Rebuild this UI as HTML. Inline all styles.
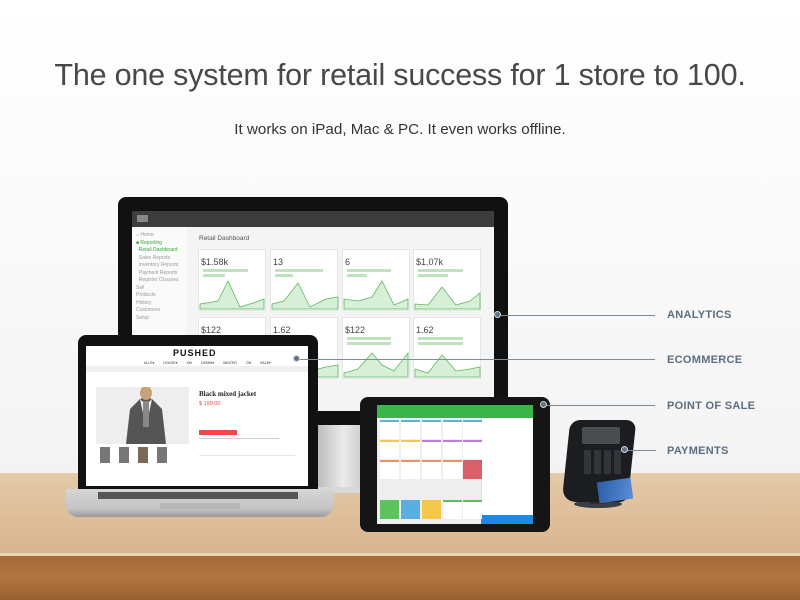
<!DOCTYPE html>
<html><head><meta charset="utf-8"><style>
*{margin:0;padding:0;box-sizing:border-box}
body{width:800px;height:600px;overflow:hidden;position:relative;font-family:"Liberation Sans",sans-serif;background:linear-gradient(#ffffff,#f5f5f5 70%,#eeeeee)}
.a{position:absolute}
h1{position:absolute;top:58px;left:0;width:800px;text-align:center;font-weight:normal;font-size:30.5px;color:#484848;letter-spacing:-0.2px}
.sub{position:absolute;top:121px;left:0;width:800px;text-align:center;font-size:15.2px;color:#333}
.lbl{position:absolute;font-size:11px;font-weight:bold;color:#5b6e80;letter-spacing:0.3px}
.ln{position:absolute;height:1px;background:#7d8c99}
.dot{position:absolute;width:7px;height:7px;border-radius:50%;background:#5e7384;border:1px solid #cfd8de}
.card{position:absolute;background:#fff;border:1px solid #e6e6e6}
.g{background:#bfe3bf;height:3px;position:absolute}
.tile{position:absolute;background:#fff;border-top:2px solid #5bb0e8;width:19px;height:19px}
</style></head><body>
<h1>The one system for retail success for 1 store to 100.</h1>
<div class="sub">It works on iPad, Mac &amp; PC. It even works offline.</div>

<div class="a" style="left:0;top:473px;width:800px;height:82px;background:linear-gradient(#e3caa8,#e0c19e 40%,#d9b58f)"></div>
<div class="a" style="left:0;top:553px;width:800px;height:3px;background:#ecd5b6"></div>
<div class="a" style="left:0;top:556px;width:800px;height:44px;background:linear-gradient(#a76b3c,#b0743f 50%,#99612f)"></div>

<div class="a" style="left:318px;top:415px;width:50px;height:75px;background:linear-gradient(90deg,#bdbdbd,#eaeaea 50%,#c4c4c4)"></div>
<div class="a" style="left:300px;top:487px;width:62px;height:6px;background:#d8d8d8;border-radius:2px"></div>
<div class="a" style="left:118px;top:197px;width:390px;height:228px;background:#111;border-radius:8px 8px 0 0"></div>
<div class="a" style="left:132px;top:211px;width:362px;height:200px;background:#f4f4f4"></div>
<div class="a" style="left:132px;top:211px;width:362px;height:16px;background:#3d3d3d"></div>
<div class="a" style="left:137px;top:215px;width:11px;height:7px;background:#888"></div>
<div class="a" style="left:132px;top:227px;width:54px;height:184px;background:#fafafa"></div>
<div class="a" style="left:136px;top:232px;font-size:5px;color:#999;line-height:7.5px">⌂ Home<br><span style="color:#3a3">■ Reporting</span><br>&nbsp; <span style="color:#3a3">Retail Dashboard</span><br>&nbsp; Sales Reports<br>&nbsp; Inventory Reports<br>&nbsp; Payment Reports<br>&nbsp; Register Closures<br>Sell<br>Products<br>History<br>Customers<br>Setup</div>
<div class="a" style="left:199px;top:235px;font-size:6.5px;color:#555">Retail Dashboard</div>
<div class="card" style="left:198px;top:249px;width:68px;height:62px"></div>
<div class="card" style="left:270px;top:249px;width:68px;height:62px"></div>
<div class="card" style="left:342px;top:249px;width:68px;height:62px"></div>
<div class="card" style="left:413px;top:249px;width:68px;height:62px"></div>
<div class="card" style="left:198px;top:317px;width:68px;height:62px"></div>
<div class="card" style="left:270px;top:317px;width:68px;height:62px"></div>
<div class="card" style="left:342px;top:317px;width:68px;height:62px"></div>
<div class="card" style="left:413px;top:317px;width:68px;height:62px"></div>
<div class="a" style="left:201px;top:257px;font-size:9px;color:#444">$1.58k</div>
<div class="a" style="left:273px;top:257px;font-size:9px;color:#444">13</div>
<div class="a" style="left:345px;top:257px;font-size:9px;color:#444">6</div>
<div class="a" style="left:416px;top:257px;font-size:9px;color:#444">$1.07k</div>
<div class="a" style="left:201px;top:325px;font-size:9px;color:#444">$122</div>
<div class="a" style="left:273px;top:325px;font-size:9px;color:#444">1.62</div>
<div class="a" style="left:345px;top:325px;font-size:9px;color:#444">$122</div>
<div class="a" style="left:416px;top:325px;font-size:9px;color:#444">1.62</div>
<svg class="a" style="left:198px;top:249px" width="284" height="130">
<g fill="#d6efd6" stroke="#5cb85c" stroke-width="0.8">
<path d="M2 55 L20 52 L30 32 L42 58 L55 54 L66 50 V60 H2Z"/>
<path d="M74 55 L86 52 L100 34 L112 58 L128 50 L140 48 V60 H74Z"/>
<path d="M146 50 L160 52 L174 48 L184 32 L196 56 L210 50 V60 H146Z"/>
<path d="M217 55 L230 56 L244 38 L258 56 L272 52 L282 44 V60 H217Z"/>
<path d="M2 120 L20 122 L30 105 L42 126 L55 120 L66 118 V128 H2Z"/>
<path d="M74 124 L88 126 L100 104 L112 122 L128 118 L140 116 V128 H74Z"/>
<path d="M146 124 L160 120 L174 104 L184 116 L196 122 L210 104 V128 H146Z"/>
<path d="M217 120 L230 124 L244 106 L258 122 L272 120 L282 118 V128 H217Z"/>
</g></svg>
<div class="g" style="left:203px;top:269px;width:45px"></div><div class="g" style="left:275px;top:269px;width:48px"></div><div class="g" style="left:347px;top:269px;width:44px"></div><div class="g" style="left:418px;top:269px;width:45px"></div>
<div class="g" style="left:203px;top:274px;width:22px"></div><div class="g" style="left:275px;top:274px;width:18px"></div><div class="g" style="left:347px;top:274px;width:20px"></div><div class="g" style="left:418px;top:274px;width:30px"></div>
<div class="g" style="left:347px;top:337px;width:44px"></div><div class="g" style="left:418px;top:337px;width:45px"></div>
<div class="g" style="left:347px;top:342px;width:44px"></div><div class="g" style="left:418px;top:342px;width:45px"></div>

<div class="a" style="left:78px;top:335px;width:240px;height:156px;background:#111;border-radius:8px 8px 0 0"></div>
<div class="a" style="left:86px;top:346px;width:222px;height:140px;background:#fff"></div>
<div class="a" style="left:86px;top:366px;width:222px;height:6px;background:#f0f0f0"></div>
<div class="a" style="left:173px;top:348px;font-size:9px;font-weight:bold;letter-spacing:1px;color:#111">PUSHED</div>
<div class="a" style="left:144px;top:361px;font-size:3.5px;color:#333;word-spacing:8px">ALLE▾ HOUSE▾ SKI DENIM▾ WINTER ON SALE▾</div>
<div class="a" style="left:96px;top:387px;width:93px;height:57px;background:#eee"></div>
<svg class="a" style="left:96px;top:387px" width="93" height="57"><path d="M30 57 L34 22 L44 12 L50 10 L56 12 L66 22 L70 57Z" fill="#555"/><path d="M44 12 L50 40 L56 12 L52 16 L48 16Z" fill="#f4f4f4"/><path d="M47 14 L53 14 L53 40 L47 40Z" fill="#888"/><ellipse cx="50" cy="6" rx="6" ry="7" fill="#c9a078"/></svg>
<div class="a" style="left:100px;top:447px;width:10px;height:16px;background:#777"></div>
<div class="a" style="left:119px;top:447px;width:10px;height:16px;background:#777"></div>
<div class="a" style="left:138px;top:447px;width:10px;height:16px;background:#7a6a55"></div>
<div class="a" style="left:157px;top:447px;width:10px;height:16px;background:#777"></div>
<div class="a" style="left:199px;top:390px;font-family:'Liberation Serif',serif;font-weight:bold;font-size:7px;color:#222">Black mixed jacket</div>
<div class="a" style="left:199px;top:401px;font-size:5.5px;color:#e44">$ 199.00</div>
<div class="a" style="left:199px;top:430px;width:38px;height:5px;background:#f04848"></div>
<div class="a" style="left:199px;top:438px;width:80px;height:1px;background:#ccc"></div>
<div class="a" style="left:199px;top:455px;width:96px;height:1px;background:#e6e6e6"></div>
<div class="a" style="left:66px;top:489px;width:267px;height:28px;background:linear-gradient(#d6d6d6,#c4c4c4 70%,#9b9b9b);border-radius:2px 2px 12px 12px"></div>
<div class="a" style="left:98px;top:492px;width:200px;height:7px;background:#555"></div>
<div class="a" style="left:160px;top:503px;width:80px;height:6px;background:#b8b8b8"></div>

<div class="a" style="left:360px;top:397px;width:190px;height:135px;background:#151515;border-radius:8px"></div>
<div class="a" style="left:377px;top:405px;width:156px;height:119px;background:#eeeeee"></div>
<div class="a" style="left:377px;top:405px;width:156px;height:13px;background:#3bb54a"></div>
<div class="a" style="left:481px;top:418px;width:52px;height:106px;background:#fff;border-left:1px solid #ddd"></div>
<div class="a" style="left:481px;top:515px;width:52px;height:9px;background:#1e88e5"></div>
<div class="tile" style="left:380px;top:420px"></div><div class="tile" style="left:401px;top:420px"></div><div class="tile" style="left:422px;top:420px"></div><div class="tile" style="left:443px;top:420px"></div><div class="tile" style="left:463px;top:420px"></div>
<div class="tile" style="left:380px;top:440px;border-color:#f2c94c"></div><div class="tile" style="left:401px;top:440px;border-color:#f2c94c"></div><div class="tile" style="left:422px;top:440px;border-color:#c07be0"></div><div class="tile" style="left:443px;top:440px;border-color:#c07be0"></div><div class="tile" style="left:463px;top:440px;border-color:#c07be0"></div>
<div class="tile" style="left:380px;top:460px;border-color:#f78a6a"></div><div class="tile" style="left:401px;top:460px;border-color:#f78a6a"></div><div class="tile" style="left:422px;top:460px;border-color:#f78a6a"></div><div class="tile" style="left:443px;top:460px;border-color:#f78a6a"></div><div class="tile" style="left:463px;top:460px;background:#d9606a;border-color:#d9606a"></div>
<div class="tile" style="left:380px;top:500px;background:#5dc15d;border-color:#5dc15d"></div><div class="tile" style="left:401px;top:500px;background:#5aaee0;border-color:#5aaee0"></div><div class="tile" style="left:422px;top:500px;background:#f4c84c;border-color:#f4c84c"></div><div class="tile" style="left:443px;top:500px;border-color:#5dc15d"></div><div class="tile" style="left:463px;top:500px;border-color:#5dc15d"></div>

<div class="a" style="left:574px;top:500px;width:48px;height:8px;background:#3a3d44;border-radius:50%"></div>
<div class="a" style="left:590px;top:490px;width:14px;height:14px;background:#2a2c30"></div>
<div class="a" style="left:566px;top:420px;width:66px;height:82px;background:#1c1d20;border-radius:10px 10px 8px 14px;transform:skewX(-6deg)"></div>
<div class="a" style="left:582px;top:427px;width:38px;height:17px;background:#4a4c50;border-radius:2px"></div>
<div class="a" style="left:584px;top:450px;width:40px;height:24px;background:repeating-linear-gradient(90deg,#33353a 0 7px,#1c1d20 7px 10px)"></div>
<div class="a" style="left:598px;top:480px;width:34px;height:21px;background:linear-gradient(110deg,#2a5ca8,#5a8fd8);transform:rotate(-8deg)"></div>

<div class="ln" style="left:499px;top:315px;width:156px"></div><div class="dot" style="left:494px;top:311px"></div>
<div class="ln" style="left:298px;top:359px;width:357px"></div><div class="dot" style="left:293px;top:355px"></div>
<div class="ln" style="left:545px;top:405px;width:110px"></div><div class="dot" style="left:540px;top:401px"></div>
<div class="ln" style="left:626px;top:450px;width:30px"></div><div class="dot" style="left:621px;top:446px"></div>
<div class="lbl" style="left:667px;top:309px">ANALYTICS</div>
<div class="lbl" style="left:667px;top:354px">ECOMMERCE</div>
<div class="lbl" style="left:667px;top:400px">POINT OF SALE</div>
<div class="lbl" style="left:667px;top:445px">PAYMENTS</div>
</body></html>
